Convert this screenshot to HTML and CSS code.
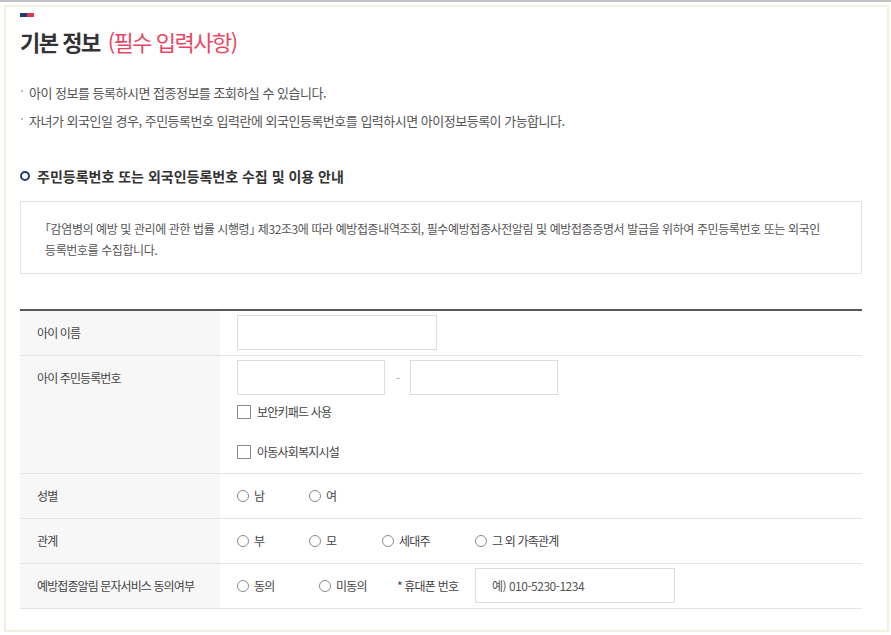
FILE: index.html
```html
<!DOCTYPE html>
<html lang="ko">
<head>
<meta charset="utf-8">
<title>기본 정보</title>
<link rel="stylesheet" href="styles.css">
</head>
<body>
<div class="topbar"></div>
<div class="frame">
  <div class="flag"><span class="flag-navy"></span><span class="flag-red"></span></div>
  <h2 class="title">기본 정보<span class="req">(필수 입력사항)</span></h2>
  <ul class="notes">
    <li>아이 정보를 등록하시면 접종정보를 조회하실 수 있습니다.</li>
    <li>자녀가 외국인일 경우, 주민등록번호 입력란에 외국인등록번호를 입력하시면 아이정보등록이 가능합니다.</li>
  </ul>
  <h3 class="sub"><span class="ring"></span>주민등록번호 또는 외국인등록번호 수집 및 이용 안내</h3>
  <div class="notice">｢감염병의 예방 및 관리에 관한 법률 시행령｣ 제32조3에 따라 예방접종내역조회, 필수예방접종사전알림 및 예방접종증명서 발급을 위하여 주민등록번호 또는 외국인<br>등록번호를 수집합니다.</div>

  <div class="form">
    <div class="row">
      <div class="th">아이 이름</div>
      <div class="td"><input class="inp inp-name" type="text"></div>
    </div>
    <div class="row">
      <div class="th">아이 주민등록번호</div>
      <div class="td td-stack">
        <div class="ssn">
          <input class="inp inp-ssn" type="text">
          <span class="dash">-</span>
          <input class="inp inp-ssn" type="text">
        </div>
        <div class="check first"><span class="box"></span>보안키패드 사용</div>
        <div class="check second"><span class="box"></span>아동사회복지시설</div>
      </div>
    </div>
    <div class="row">
      <div class="th">성별</div>
      <div class="td td-mid">
        <div class="opts opts-gender">
          <span class="opt"><span class="radio"></span>남</span>
          <span class="opt"><span class="radio"></span>여</span>
        </div>
      </div>
    </div>
    <div class="row">
      <div class="th">관계</div>
      <div class="td td-mid">
        <div class="opts opts-rel">
          <span class="opt"><span class="radio"></span>부</span>
          <span class="opt"><span class="radio"></span>모</span>
          <span class="opt"><span class="radio"></span>세대주</span>
          <span class="opt"><span class="radio"></span>그 외 가족관계</span>
        </div>
      </div>
    </div>
    <div class="row">
      <div class="th">예방접종알림 문자서비스 동의여부</div>
      <div class="td">
        <div class="opts opts-consent">
          <span class="opt"><span class="radio"></span>동의</span>
          <span class="opt"><span class="radio"></span>미동의</span>
          <span class="opt phone-label">* 휴대폰 번호</span>
          <input class="inp inp-phone" type="text" placeholder="예) 010-5230-1234">
        </div>
      </div>
    </div>
  </div>
</div>
</body>
</html>
```
FILE: styles.css
```css
html, body {
  margin: 0;
  padding: 0;
  background: #ffffff;
}
body {
  font-family: "Noto Sans CJK KR", "Noto Sans", sans-serif;
  color: #444;
}
.topbar {
  height: 2px;
  background: #c2c2c2;
}
.frame {
  margin: 3px 2px 0 4px;
  height: 627px;
  box-sizing: border-box;
  border: 2px solid #f3efe1;
  padding: 6px 25px 0 14px;
}
.flag {
  display: flex;
  width: 14px;
  height: 4px;
}
.flag-navy {
  flex: 1;
  background: #1d3d6c;
}
.flag-red {
  flex: 1;
  background: #e8344f;
}
.title {
  margin: 11px 0 0;
  font-size: 22px;
  line-height: 26px;
  font-weight: 700;
  letter-spacing: -1.5px;
  color: #333;
}
.req {
  margin-left: 8px;
  font-weight: 400;
  color: #e8475f;
}
.notes {
  list-style: none;
  margin: 25px 0 0;
  padding: 0 0 0 1px;
}
.notes li {
  display: flex;
  align-items: center;
  font-size: 13px;
  line-height: 28px;
  letter-spacing: -0.5px;
  color: #555;
}
.notes li::before {
  content: "";
  width: 2px;
  height: 2px;
  margin: 0 6px 5px 0;
  background: #bbb;
  flex: none;
}
.sub {
  display: flex;
  align-items: center;
  margin: 31px 0 0;
  font-size: 14px;
  line-height: 20px;
  font-weight: 700;
  letter-spacing: 0;
  color: #333;
}
.ring {
  width: 10px;
  height: 10px;
  box-sizing: border-box;
  border: 2px solid #1f3f75;
  border-radius: 50%;
  margin: 0 7px 0 0;
  flex: none;
}
.notice {
  margin-top: 15px;
  border: 1px solid #e3e3e3;
  padding: 16px 20px 13px 24px;
  font-size: 12px;
  line-height: 21px;
  letter-spacing: -0.4px;
  color: #555;
  white-space: nowrap;
}
.form {
  margin-top: 35px;
  border-top: 2px solid #585858;
}
.row {
  display: grid;
  grid-template-columns: 200px 1fr;
  border-bottom: 1px solid #e4e4e4;
}
.th {
  background: #f7f7f7;
  padding: 12px 17px 0;
  font-size: 12px;
  line-height: 20px;
  letter-spacing: -0.9px;
  color: #444;
}
.td {
  padding: 4px 17px 5px;
  font-size: 12px;
  letter-spacing: -0.8px;
  color: #444;
}
.td-mid {
  height: 44px;
  box-sizing: border-box;
  padding: 0 17px;
  display: flex;
  align-items: center;
}
.td-stack {
  padding-bottom: 14px;
}
.inp {
  display: block;
  height: 35px;
  box-sizing: border-box;
  border: 1px solid #dcdcdc;
  background: #fff;
  margin: 0;
  padding: 0 16px;
  font-family: inherit;
  font-size: 12px;
  letter-spacing: -0.5px;
  color: #555;
  outline: none;
}
.inp::placeholder {
  color: #555;
}
.inp-name {
  width: 200px;
}
.inp-ssn {
  width: 148px;
}
.inp-phone {
  width: 200px;
}
.ssn {
  display: flex;
  align-items: center;
}
.dash {
  width: 25px;
  text-align: center;
  color: #999;
  font-size: 11px;
}
.check {
  display: flex;
  align-items: center;
  gap: 6px;
  height: 15px;
  line-height: 15px;
}
.check.first {
  margin-top: 9px;
}
.check.second {
  margin-top: 25px;
}
.box {
  width: 14px;
  height: 14px;
  box-sizing: border-box;
  border: 1px solid #8a8a8a;
  background: #fff;
  flex: none;
}
.opts {
  display: grid;
  grid-auto-flow: column;
  align-items: center;
}
.opts-gender {
  grid-template-columns: 72px 72px;
}
.opts-rel {
  grid-template-columns: 72px 73px 93px auto;
}
.opts-consent {
  grid-template-columns: 82px 78px 78px 200px;
}
.opt {
  display: flex;
  align-items: center;
  gap: 5px;
  white-space: nowrap;
  line-height: 20px;
}
.radio {
  width: 12px;
  height: 12px;
  box-sizing: border-box;
  border: 1px solid #8a8a8a;
  border-radius: 50%;
  background: #fff;
  flex: none;
}
.phone-label {
  gap: 0;
}
```
